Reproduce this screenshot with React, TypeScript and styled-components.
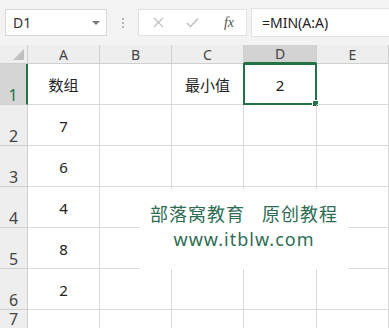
import styled, { createGlobalStyle } from "styled-components";

const Global = createGlobalStyle`
    body {
        margin: 0;
        background: #ffffff;
        font-family: "Noto Sans", "Noto Sans CJK SC", sans-serif;
        overflow: hidden;
    }
`;

const Page = styled.div`
    position: relative;
    width: 389px;
    height: 328px;
    overflow: hidden;
    background: #ffffff;
`;

const Toolbar = styled.div`
    display: flex;
    align-items: center;
    height: 45px;
    padding: 0 0 0 5px;
    background: #f3f3f3;
    box-sizing: border-box;
`;

const NameBox = styled.div`
    display: flex;
    align-items: center;
    justify-content: space-between;
    width: 102px;
    height: 27px;
    box-sizing: border-box;
    padding: 0 6px 0 7px;
    background: #ffffff;
    border: 1px solid #d8d8d8;
    font-size: 14px;
    color: #333;
`;

const Caret = styled.span`
    width: 0;
    height: 0;
    border-left: 4px solid transparent;
    border-right: 4px solid transparent;
    border-top: 4px solid #7a7a7a;
`;

const Dots = styled.div`
    display: flex;
    flex-direction: column;
    gap: 2px;
    margin: 0 14px 0 15px;
    span {
        width: 2px;
        height: 2px;
        background: #b5b5b5;
    }
`;

const FxBox = styled.div`
    display: flex;
    align-items: center;
    width: 109px;
    height: 27px;
    box-sizing: border-box;
    padding: 0 12px 0 14px;
    background: #ffffff;
    border: 1px solid #e2e2e2;
    gap: 22px;
    color: #c4c4c4;
`;

const Fx = styled.span`
    margin-left: auto;
    font-family: "Liberation Serif", serif;
    font-style: italic;
    font-size: 14px;
    color: #555;
`;

const FormulaInput = styled.div`
    flex: 1;
    display: flex;
    align-items: center;
    height: 27px;
    margin-left: 4px;
    padding-left: 10px;
    background: #ffffff;
    border: 1px solid #e2e2e2;
    border-right: none;
    font-size: 14px;
    color: #222;
`;

const Grid = styled.div`
    display: grid;
    grid-template-columns: 28px 72px 72px 72px 73px 72px;
    grid-template-rows: 19px repeat(6, 41px) 19px;
`;

const Corner = styled.div`
    background: #eeeeee;
    border-right: 1px solid #cfcfcf;
    border-bottom: 1px solid #cfcfcf;
    position: relative;
    box-sizing: border-box;
    &::after {
        content: "";
        position: absolute;
        right: 3px;
        bottom: 3px;
        border-left: 11px solid transparent;
        border-bottom: 11px solid #c0c0c0;
    }
`;

const ColHead = styled.div<{ $active?: boolean }>`
    display: flex;
    align-items: center;
    justify-content: center;
    box-sizing: border-box;
    background: ${(p) => (p.$active ? "#d3d3d3" : "#eeeeee")};
    border-right: 1px solid #cfcfcf;
    border-bottom: ${(p) => (p.$active ? "2px solid #217346" : "1px solid #cfcfcf")};
    font-size: 14px;
    color: #444;
`;

const RowHead = styled.div<{ $active?: boolean }>`
    display: flex;
    align-items: flex-end;
    justify-content: center;
    padding-bottom: 1px;
    box-sizing: border-box;
    overflow: hidden;
    background: ${(p) => (p.$active ? "#d6d6d6" : "#eeeeee")};
    border-right: ${(p) => (p.$active ? "2px solid #217346" : "1px solid #cfcfcf")};
    border-bottom: 1px solid #cfcfcf;
    font-size: 16px;
    line-height: 16px;
    color: ${(p) => (p.$active ? "#217346" : "#444")};
`;

const Cell = styled.div<{ $selected?: boolean }>`
    display: flex;
    align-items: center;
    justify-content: center;
    padding-top: 1px;
    box-sizing: border-box;
    border-right: 1px solid #d9d9d9;
    border-bottom: 1px solid #d9d9d9;
    font-size: 15px;
    color: #222;
    position: relative;
    ${(p) =>
        p.$selected &&
        `
        border: 2px solid #217346;
        margin: -1px 0 0 -1px;
        &::after {
            content: "";
            position: absolute;
            right: -4px;
            bottom: -4px;
            width: 5px;
            height: 5px;
            background: #217346;
            border: 1px solid #fff;
        }
    `}
`;

const Watermark = styled.div`
    position: absolute;
    left: 140px;
    top: 189px;
    width: 208px;
    height: 80px;
    background: #ffffff;
    display: flex;
    flex-direction: column;
    align-items: center;
    justify-content: center;
    padding-bottom: 4px;
    box-sizing: border-box;
    color: #2e6d54;
    font-size: 18px;
    line-height: 25px;
    letter-spacing: 1px;
`;

const cols = ["A", "B", "C", "D", "E"];
const rows: string[][] = [
    ["数组", "", "最小值", "2", ""],
    ["7", "", "", "", ""],
    ["6", "", "", "", ""],
    ["4", "", "", "", ""],
    ["8", "", "", "", ""],
    ["2", "", "", "", ""],
    ["", "", "", "", ""],
];

export default function App() {
    return (
        <Page>
            <Global />
            <Toolbar>
                <NameBox>
                    D1
                    <Caret />
                </NameBox>
                <Dots>
                    <span />
                    <span />
                    <span />
                </Dots>
                <FxBox>
                    <svg width="11" height="11" viewBox="0 0 11 11">
                        <path d="M1 1L10 10M10 1L1 10" stroke="#c4c4c4" strokeWidth="1.4" />
                    </svg>
                    <svg width="13" height="11" viewBox="0 0 13 11">
                        <path d="M1 6L4.5 9.5L12 1.5" stroke="#c4c4c4" strokeWidth="1.6" fill="none" />
                    </svg>
                    <Fx>fx</Fx>
                </FxBox>
                <FormulaInput>=MIN(A:A)</FormulaInput>
            </Toolbar>
            <Grid>
                <Corner />
                {cols.map((c) => (
                    <ColHead key={c} $active={c === "D"}>
                        {c}
                    </ColHead>
                ))}
                {rows.map((r, i) => [
                    <RowHead key={`h${i}`} $active={i === 0}>
                        {i + 1}
                    </RowHead>,
                    ...r.map((v, j) => (
                        <Cell key={`${i}-${j}`} $selected={i === 0 && j === 3}>
                            {v}
                        </Cell>
                    )),
                ])}
            </Grid>
            <Watermark>
                <div>部落窝教育&nbsp;&nbsp;&nbsp;原创教程</div>
                <div>www.itblw.com</div>
            </Watermark>
        </Page>
    );
}
